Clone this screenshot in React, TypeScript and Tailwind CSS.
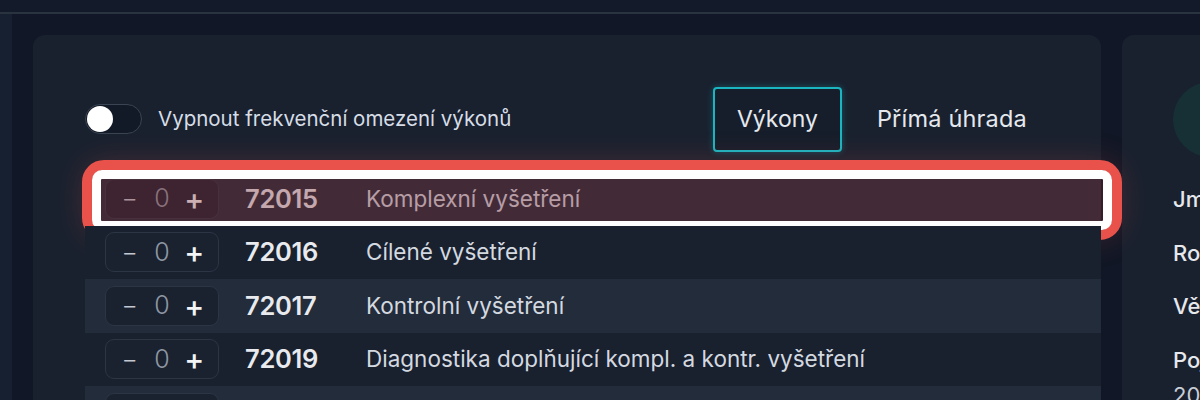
import React from "react";

type Row = { code: string; name: string };

const rows: Row[] = [
  { code: "72015", name: "Komplexní vyšetření" },
  { code: "72016", name: "Cílené vyšetření" },
  { code: "72017", name: "Kontrolní vyšetření" },
  { code: "72019", name: "Diagnostika doplňující kompl. a kontr. vyšetření" },
  { code: "72021", name: "Konziliární vyšetření" },
];

function Stepper() {
  return (
    <div className="flex h-[40px] w-[114px] shrink-0 items-center gap-[3px] rounded-[9px] border border-[#2b3544] bg-[#1a2230] px-[9px] text-[25px] leading-none">
      <span className="w-[30px] text-center font-light text-[#c3c8d0]">−</span>
      <span className="w-[30px] text-center font-light text-[#8e97a3]">0</span>
      <span className="w-[30px] text-center text-[30px] font-medium text-[#f3f4f6]">+</span>
    </div>
  );
}

function ServiceRow({ row, index }: { row: Row; index: number }) {
  const striped = index % 2 === 0;
  return (
    <div
      className={`relative flex h-[53.5px] items-center pl-[20px] ${
        striped ? "bg-[#222c3a]" : "bg-[#19212f]"
      }`}
    >
      <Stepper />
      <span className="ml-[26px] w-[121px] shrink-0 text-[25.5px] font-semibold tracking-[-0.3px] text-[#e8eaee]">
        {row.code}
      </span>
      <span className="whitespace-nowrap text-[22.5px] text-[#d4d9e0]">{row.name}</span>

      {index === 0 ? (
        // highlight annotation over the first row
        <div className="absolute -bottom-[14px] -left-[3px] -right-[21px] -top-[12px] rounded-[22px] border-[10px] border-[#e8524a] shadow-[0_0_30px_rgba(230,80,70,0.2)]">
          <div className="h-full w-full rounded-[10px] border-[9px] border-white bg-[rgba(130,40,50,0.34)]" />
        </div>
      ) : null}
    </div>
  );
}

export default function App() {
  return (
    <div className="h-[400px] w-[1200px] overflow-hidden bg-[#111726] font-['Inter','Noto_Sans',sans-serif]">
      <div className="h-[14px] border-b-2 border-[#29323f] bg-[#131a2a]" />
      <div className="flex h-[386px]">
        <div className="w-[12px] shrink-0 bg-[#172030]" />
        <div className="flex min-w-0 flex-1 gap-[21px] pl-[21px] pt-[21px]">
          <section className="w-[1068px] shrink-0 rounded-t-[12px] bg-[#19212f] pt-[52px]">
            <div className="flex h-[64px] items-center justify-between pl-[52px] pr-[51px]">
              <label className="flex items-center gap-[16px]">
                <span className="flex h-[30px] w-[57px] items-center rounded-full border border-[#3a4452] bg-[#131a27] px-[1px]">
                  <span className="h-[26px] w-[26px] rounded-full bg-white" />
                </span>
                <span className="text-[20.5px] text-[#d6dde6]">Vypnout frekvenční omezení výkonů</span>
              </label>
              <div className="flex items-center gap-[12px]">
                <button className="h-[65px] w-[129px] rounded-[4px] border-2 border-[#1bb5c1] bg-[#161e2b] text-[23px] text-[#e5e9ee] shadow-[0_0_6px_rgba(27,181,193,0.35)]">
                  Výkony
                </button>
                <button className="h-[65px] px-[23px] text-[23.5px] tracking-[0.2px] text-[#e5e9ee]">
                  Přímá úhrada
                </button>
              </div>
            </div>

            <div className="mt-[21px] pl-[52px]">
              {rows.map((row, i) => (
                <ServiceRow key={row.code} row={row} index={i} />
              ))}
            </div>
          </section>

          <aside className="min-w-0 flex-1 overflow-hidden rounded-tl-[12px] bg-[#19212f] pl-[51px] pt-[47px]">
            <div className="h-[75px] w-[75px] rounded-full bg-[#163036]" />
            <div className="mt-[29px] flex flex-col gap-[27.5px] text-[22px] font-medium leading-[26px] text-[#e6e8ec]">
              <span className="whitespace-nowrap">Jméno</span>
              <span className="whitespace-nowrap">Rodné číslo</span>
              <span className="whitespace-nowrap">Věk</span>
              <div className="flex flex-col gap-[9px]">
                <span className="whitespace-nowrap">Pojišťovna</span>
                <span className="whitespace-nowrap font-normal text-[#c9ced6]">2013</span>
              </div>
            </div>
          </aside>
        </div>
      </div>
    </div>
  );
}
